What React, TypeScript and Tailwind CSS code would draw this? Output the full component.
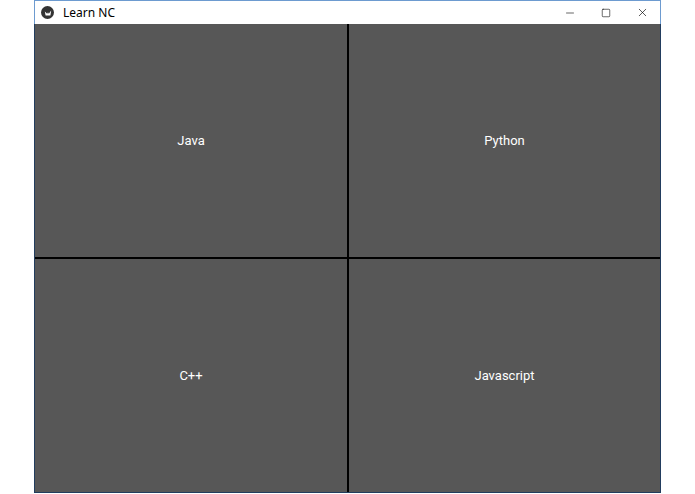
import { Minus, Square, X } from "lucide-react";

// ── Tile ───────────────────────────────────────────────────────────────────
function Tile({ label }: { label: string }) {
  return (
    <button className="flex items-center justify-center bg-[#575757] text-[13px] text-white" style={{ fontFamily: "Roboto, sans-serif" }}>
      {label}
    </button>
  );
}

export default function App() {
  const langs = ["Java", "Python", "C++", "Javascript"];

  return (
    <div className="h-[494px] w-[695px] bg-white">
      <div className="ml-[34px] flex h-[493px] w-[627px] flex-col">
        {/* ── Title bar ─────────────────────────────────────────── */}
        <div
          className="flex h-[24px] flex-shrink-0 items-center border-x border-t border-[#6d9bd0] bg-white"
          style={{ fontFamily: "'Segoe UI', 'Noto Sans', sans-serif" }}
        >
          <div className="ml-[6px] flex h-[13px] w-[13px] items-center justify-center rounded-full bg-[#333]">
            <svg viewBox="0 0 10 10" className="h-[8px] w-[8px]">
              <path d="M1 3 L4 6 L5 4 L6 6 L9 2 L8 8 L2 8 Z" fill="white" />
            </svg>
          </div>
          <span className="ml-[9px] text-[12px] text-black">Learn NC</span>
          <div className="ml-auto flex h-full">
            <div className="flex w-[36px] items-center justify-center">
              <Minus className="h-[12px] w-[12px] text-black" strokeWidth={1.2} />
            </div>
            <div className="flex w-[36px] items-center justify-center">
              <Square className="h-[10px] w-[10px] text-black" strokeWidth={1.4} />
            </div>
            <div className="flex w-[36px] items-center justify-center">
              <X className="h-[13px] w-[13px] text-black" strokeWidth={1.2} />
            </div>
          </div>
        </div>

        {/* ── Content ──────────────────────────────────────────── */}
        <div className="grid flex-1 grid-cols-[312px_311px] grid-rows-2 gap-[2px] border-x border-b border-[#223d5e] bg-black">
          {langs.map((l) => (
            <Tile key={l} label={l} />
          ))}
        </div>
      </div>
    </div>
  );
}
